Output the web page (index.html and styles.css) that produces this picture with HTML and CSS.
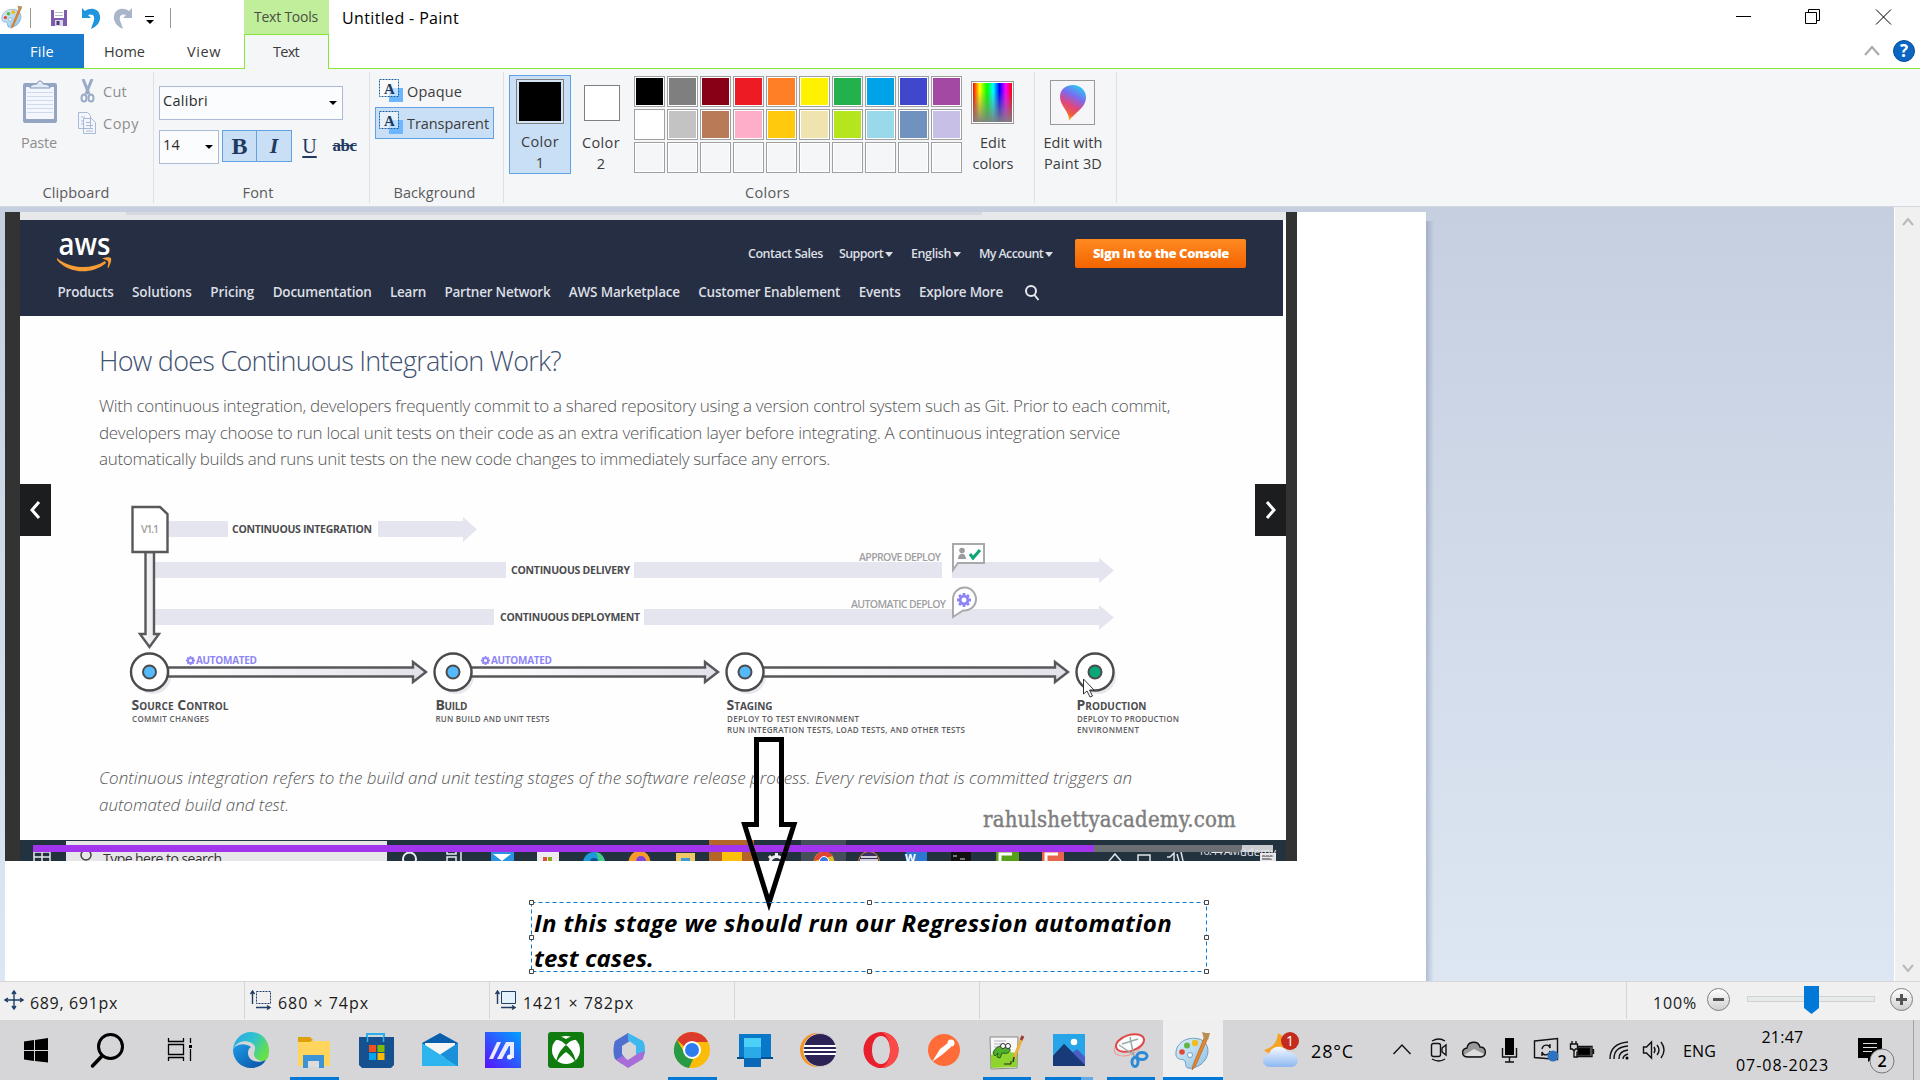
FILE: index.html
```html
<!DOCTYPE html>
<html lang="en">
<head>
<meta charset="utf-8">
<title>Untitled - Paint</title>
<link rel="stylesheet" href="styles.css">
</head>
<body>
<svg width="0" height="0" class="defs">
  <defs>
    <linearGradient id="shaft" x1="0" x2="1"><stop offset="0" stop-color="#fff"/><stop offset="1" stop-color="#e1e2ea"/></linearGradient>
    <linearGradient id="rainbow"><stop offset="0" stop-color="#f00"/><stop offset=".17" stop-color="#ff0"/><stop offset=".36" stop-color="#0f0"/><stop offset=".52" stop-color="#0ff"/><stop offset=".68" stop-color="#00f"/><stop offset=".84" stop-color="#f0f"/><stop offset="1" stop-color="#f00"/></linearGradient>
    <linearGradient id="fadegray" x2="0" y2="1"><stop offset=".2" stop-color="#808080" stop-opacity="0"/><stop offset="1" stop-color="#808080" stop-opacity=".95"/></linearGradient>
    <linearGradient id="drop" x1=".8" y1="0" x2=".4" y2="1"><stop offset="0" stop-color="#1fd6f5"/><stop offset=".35" stop-color="#7a6cf0"/><stop offset=".62" stop-color="#e0457d"/><stop offset=".85" stop-color="#f0603a"/><stop offset="1" stop-color="#fdb515"/></linearGradient>
    <linearGradient id="edgeA" x1="0" y1="0" x2="1" y2=".5"><stop offset="0" stop-color="#2aa6e8"/><stop offset=".55" stop-color="#30c2d0"/><stop offset="1" stop-color="#63e04a"/></linearGradient>
    <linearGradient id="edgeB" x1="0" y1="0" x2="1" y2="1"><stop offset="0" stop-color="#1d9be8"/><stop offset="1" stop-color="#0a4fa0"/></linearGradient>
    <linearGradient id="ma" x1="1" y1="0" x2="0" y2="1"><stop offset="0" stop-color="#00a2ff"/><stop offset="1" stop-color="#5a10ff"/></linearGradient>
    <linearGradient id="sky" x2="0" y2="1"><stop offset="0" stop-color="#f5f9ff"/><stop offset="1" stop-color="#8db8f2"/></linearGradient>
    <linearGradient id="palG" x1="0" y1="0" x2="1" y2="1"><stop offset="0" stop-color="#dff1fb"/><stop offset="1" stop-color="#8fc1e4"/></linearGradient>
    <linearGradient id="knob" x2="0" y2="1"><stop offset="0" stop-color="#fff"/><stop offset="1" stop-color="#cfcfcf"/></linearGradient>
    <symbol id="palette" viewBox="0 0 36 40">
      <path d="M1 24C0 12 12 5 24 8c10 3 11 14 6 21-4 6-12 9-17 8-4-1-1-6-4-8-3-1-7 0-8-5z" fill="url(#palG)" stroke="#6d9cc0"/>
      <circle cx="7" cy="21" r="2.8" fill="#e04a35"/><circle cx="12" cy="14.500" r="3" fill="#62b545"/><circle cx="20" cy="12" r="3.200" fill="#f3bd20"/><circle cx="15" cy="24" r="2.500" fill="#fff" stroke="#6fa3c8"/>
      <path d="M29 7l3 2-12 27-3 3 1-5z" fill="#e8842a" stroke="#a85a18" stroke-width=".6"/><path d="M27 1l4 1 4 0-2 7-4-1z" fill="#b98d56"/>
    </symbol>
    <symbol id="abox" viewBox="0 0 24 24"><rect x="10" y="9" width="14" height="14" fill="#6cb6ff"/><rect x=".5" y=".5" width="19" height="17" fill="#fff" fill-opacity=".55" stroke="#1b5f9e" stroke-dasharray="2 1"/><text x="5" y="15" class="serif-a">A</text></symbol>
    <symbol id="gear" viewBox="-10 -10 20 20"><circle r="5.500" fill="none" stroke="#8f86f5" stroke-width="4"/><path d="M0-10V-6M0 10V6M-10 0H-6M10 0H6M-7-7L-4-4M7 7L4 4M-7 7L-4 4M7-7L4-4" stroke="#8f86f5" stroke-width="4"/></symbol>
  </defs>
</svg>

<header class="titlebar">
  <svg class="quick" width="244" height="34" viewBox="0 0 244 34">
    <use href="#palette" x="0" y="5" width="24" height="24"/>
    <path d="M30.500 8v20M170.500 8v20" stroke="#999"/>
    <path d="M51 10h16v16H51z" fill="#7c5bb0"/><path d="M54 10h10v8H54z" fill="#fff"/><path d="M55 12.500h8M55 15.500h8" stroke="#b9b9c8"/><path d="M55 20h8v6h-8z" fill="#d8d8e4"/><path d="M56.500 21h3v4h-3z" fill="#4e3a80"/>
    <path d="M82 8v10h9l-3-3c5-2 8 1 5 8l-2 6c6-2 10-8 9-13-1-8-10-9-15-5z" fill="#1e95dc"/>
    <path d="M132 8v10h-9l3-3c-5-2-8 1-5 8l2 6c-6-2-10-8-9-13 1-8 10-9 15-5z" fill="#a9b6ca"/>
    <path d="M145 16.500h9" stroke="#000"/><path d="M146 20h8l-4 4z"/>
  </svg>
  <div class="context-tab"><span data-w="64">Text Tools</span></div>
  <div class="window-title"><span data-w="117">Untitled - Paint</span></div>
  <svg class="controls" width="200" height="34" viewBox="1720 0 200 34" fill="none" stroke="#000">
    <path d="M1736 16.500h15"/><path d="M1805.500 12.500h11v11h-11zM1808.500 12v-2.500h11v11h-3"/><path d="M1876 9.500l15 15M1891 9.500l-15 15"/>
  </svg>
</header>
<nav class="tabs">
  <div class="tab file"><span data-w="24">File</span></div>
  <div class="tab home"><span data-w="41">Home</span></div>
  <div class="tab view"><span data-w="34">View</span></div>
  <div class="tab active"><span data-w="26">Text</span></div>
  <svg class="help" width="60" height="34" viewBox="1860 34 60 34"><path d="M1865 55l7-8 7 8" fill="none" stroke="#a8a8a8" stroke-width="2"/><circle cx="1904" cy="51" r="10.500" fill="#0a66c2" stroke="#084f98"/><text x="1904" y="57" class="help-q">?</text></svg>
</nav>

<section class="ribbon">
  <div class="group clipboard">
    <div class="row">
      <div class="big disabled paste">
        <svg width="36" height="44" viewBox="22 80 36 44"><rect x="23" y="83" width="34" height="40" rx="2" fill="#94a5c4"/><path d="M26 87h28v32H26z" fill="#f3f7fd"/><path d="M27 92.500h26M27 96.500h26M27 100.500h26M27 104.500h26M27 108.500h26M27 112.500h26" stroke="#cfd9ea"/><path d="M30 88c0-3 4-4 7-4 0-4 6-4 6 0 3 0 7 1 7 4z" fill="#dfe8f5" stroke="#8494b4"/></svg>
        <span data-w="36">Paste</span>
      </div>
      <div class="stack">
        <div class="small disabled"><svg width="20" height="24" viewBox="78 79 20 24" fill="none" stroke="#9aabc8"><path d="M83 79l6 15M92 79l-6 15" stroke-width="3"/><ellipse cx="84" cy="98" rx="2.500" ry="3.500" stroke-width="2"/><ellipse cx="91" cy="98" rx="2.500" ry="3.500" stroke-width="2"/></svg><span data-w="24">Cut</span></div>
        <div class="small disabled"><svg width="20" height="24" viewBox="78 111 20 24" fill="#f3f7fd" stroke="#a9b8d4"><path d="M78.500 112.500h9l3 3v13h-12zM83.500 118.500h8l4 4v11h-12z"/><path d="M86 122.500h4M86 125.500h7M86 128.500h7M86 131h7M81 117h4M81 121h2M81 124h2"/></svg><span data-w="36">Copy</span></div>
      </div>
    </div>
    <div class="caption"><span data-w="67">Clipboard</span></div>
  </div>
  <div class="group font">
    <div class="combo wide"><span data-w="45">Calibri</span><i class="caret"></i></div>
    <div class="row format">
      <div class="combo size"><span data-w="17">14</span><i class="caret"></i></div>
      <div class="toggle b">B</div><div class="toggle i">I</div><div class="plain u">U</div><div class="plain s"><span data-w="24">abc</span></div>
    </div>
    <div class="caption"><span data-w="31">Font</span></div>
  </div>
  <div class="group background">
    <div class="option"><svg width="24" height="24"><use href="#abox"/></svg><span data-w="55">Opaque</span></div>
    <div class="option selected"><svg width="24" height="24"><use href="#abox"/></svg><span data-w="82">Transparent</span></div>
    <div class="caption"><span data-w="82">Background</span></div>
  </div>
  <div class="group colors">
    <div class="row">
      <div class="big color-one"><i class="swatch large"></i><span data-w="38">Color</span><span>1</span></div>
      <div class="big color-two"><i class="swatch medium"></i><span data-w="38">Color</span><span>2</span></div>
      <div class="swatches">
        <i class="c1"></i><i class="c2"></i><i class="c3"></i><i class="c4"></i><i class="c5"></i><i class="c6"></i><i class="c7"></i><i class="c8"></i><i class="c9"></i><i class="c10"></i>
        <i class="c11"></i><i class="c12"></i><i class="c13"></i><i class="c14"></i><i class="c15"></i><i class="c16"></i><i class="c17"></i><i class="c18"></i><i class="c19"></i><i class="c20"></i>
        <i></i><i></i><i></i><i></i><i></i><i></i><i></i><i></i><i></i><i></i>
      </div>
      <div class="big edit"><svg width="44" height="44"><rect x=".5" y=".5" width="42" height="42" fill="#fff" stroke="#999"/><path d="M2 2h39v39H2z" fill="url(#rainbow)"/><path d="M2 2h39v39H2z" fill="url(#fadegray)"/></svg><span data-w="26">Edit</span><span data-w="41">colors</span></div>
    </div>
    <div class="caption"><span data-w="45">Colors</span></div>
  </div>
  <div class="group paint3d">
    <div class="big"><svg width="46" height="46"><rect x=".5" y=".500" width="44" height="44" fill="#f6f6f8" stroke="#999"/><path d="M19 41c1-9-9-15-9-24C10 9 16 5 23 5s13 5 13 12c0 11-11 15-17 24z" fill="url(#drop)"/></svg><span data-w="59">Edit with</span><span data-w="58">Paint 3D</span></div>
  </div>
</section>

<main class="stage">
  <div class="canvas">
    <div class="photo">
      <div class="browser-strip"></div>
      <div class="aws-nav">
        <div class="aws-top">
          <svg class="aws-logo" width="58" height="38" viewBox="55 234 58 38"><text x="58.500" y="254.500" textLength="52" lengthAdjust="spacingAndGlyphs" class="aws-word">aws</text><path d="M57 258c13 11 34 12 48 3l1 2c-14 12-37 11-49-3z" fill="#f79b34"/><path d="M102 258.500c4-1 8-2 9 0 1 1-1 7-3 10-1-1 1-6 0-7-1-2-4-2-6-3z" fill="#f79b34"/></svg>
          <div class="aws-links">
            <span class="contact" data-w="75">Contact Sales</span>
            <span class="menu"><b data-w="44">Support</b><i></i></span>
            <span class="menu"><b data-w="40">English</b><i></i></span>
            <span class="menu"><b data-w="64">My Account</b><i></i></span>
            <span class="signin"><b data-w="136">Sign In to the Console</b></span>
          </div>
        </div>
        <div class="aws-menu">
          <span data-w="56">Products</span><span data-w="60">Solutions</span><span data-w="44">Pricing</span><span data-w="99">Documentation</span><span data-w="36">Learn</span><span data-w="106">Partner Network</span><span data-w="111">AWS Marketplace</span><span data-w="142">Customer Enablement</span><span data-w="42">Events</span><span data-w="84">Explore More</span>
          <svg width="16" height="18" fill="none" stroke="#e8eaee" stroke-width="2"><circle cx="7" cy="7" r="5"/><path d="M10.500 11l4 5"/></svg>
        </div>
      </div>
      <article>
        <h1><span data-w="462">How does Continuous Integration Work?</span></h1>
        <p>
          <span data-w="1071">With continuous integration, developers frequently commit to a shared repository using a version control system such as Git. Prior to each commit,</span>
          <span data-w="1021">developers may choose to run local unit tests on their code as an extra verification layer before integrating. A continuous integration service</span>
          <span data-w="731">automatically builds and runs unit tests on the new code changes to immediately surface any errors.</span>
        </p>
        <svg class="diagram" width="1266" height="293" viewBox="20 472 1266 293">
          <g fill="#e5e5ef">
            <path d="M168 521h60v16h-60zM378 521h85v-4l14 12.500-14 12.500v-5h-85z"/>
            <path d="M155 562h351v16H155zM634 562h308v16H634zM952 562h147v-4l15 12.500-15 12.500v-5H952z"/>
            <path d="M155 609h339v16H155zM644 609h455v-4l15 12.500-15 12.500v-5H644z"/>
          </g>
          <g class="lane">
            <text x="232" y="532.500" textLength="140">CONTINUOUS INTEGRATION</text>
            <text x="511" y="573.500" textLength="119">CONTINUOUS DELIVERY</text>
            <text x="500" y="620.500" textLength="140">CONTINUOUS DEPLOYMENT</text>
          </g>
          <g class="lane gray">
            <text x="859" y="560.500" textLength="82">APPROVE DEPLOY</text>
            <text x="851" y="607.500" textLength="95">AUTOMATIC DEPLOY</text>
          </g>
          <g fill="#fff" stroke="#a9a9ab" stroke-width="2">
            <path d="M953 544h31v19h-26l-5 7z"/><path d="M953 617v-18a11.500 11.500 0 1 1 10 11.500z"/>
          </g>
          <circle cx="962" cy="550.500" r="2.800" fill="#9c9c9e"/><path d="M958 559c0-7 8-7 8 0z" fill="#9c9c9e"/><path d="M970 554l3 4 7-8" fill="none" stroke="#0ca678" stroke-width="3"/>
          <use href="#gear" x="957" y="593" width="14" height="14"/>
          <g fill="#d9d9e2" opacity=".6"><circle cx="153" cy="676" r="18"/><circle cx="456" cy="676" r="18"/><circle cx="748" cy="676" r="18"/><circle cx="1098" cy="676" r="18"/></g>
          <g fill="url(#shaft)" stroke="#58585a" stroke-width="2.400">
            <path d="M168 667.500h245v-5.500l13 10-13 10v-5.500H168z"/><path d="M471 667.500h234v-5.500l13 10-13 10v-5.500H471z"/><path d="M763 667.500h292v-5.500l13 10-13 10v-5.500H763z"/>
            <path d="M145.500 552v82h-5.500l9.500 13 9.500-13h-5v-82z"/>
            <path d="M132.500 507h27.500l7.500 7v38h-35z" fill="#fff"/>
          </g>
          <g class="lane gray"><text x="141" y="533" textLength="18">V1.1</text></g>
          <g fill="#fff" stroke="#4b4b4d" stroke-width="2.400"><circle cx="149.500" cy="672" r="18.500"/><circle cx="453" cy="672" r="18.500"/><circle cx="745" cy="672" r="18.500"/><circle cx="1095" cy="672" r="18.500"/></g>
          <g fill="#55bafc" stroke="#4b4b4d" stroke-width="2"><circle cx="149.500" cy="672" r="6.500"/><circle cx="453" cy="672" r="6.500"/><circle cx="745" cy="672" r="6.500"/><circle cx="1095" cy="672" r="6.500" fill="#0aa878"/></g>
          <use href="#gear" x="186" y="656" width="9" height="9"/><use href="#gear" x="481" y="656" width="9" height="9"/>
          <g class="lane violet"><text x="196" y="664" textLength="61">AUTOMATED</text><text x="491" y="664" textLength="61">AUTOMATED</text></g>
          <g class="step">
            <text x="131.500" y="710" textLength="97">Source Control</text><text x="435.500" y="710" textLength="32">Build</text><text x="726.500" y="710" textLength="46">Staging</text><text x="1076.500" y="710" textLength="70">Production</text>
          </g>
          <g class="note">
            <text x="132" y="722" textLength="77">COMMIT CHANGES</text><text x="435.500" y="722" textLength="114">RUN BUILD AND UNIT TESTS</text>
            <text x="727" y="722" textLength="132">DEPLOY TO TEST ENVIRONMENT</text><text x="727" y="732.500" textLength="238">RUN INTEGRATION TESTS, LOAD TESTS, AND OTHER TESTS</text>
            <text x="1077" y="722" textLength="102">DEPLOY TO PRODUCTION</text><text x="1077" y="732.500" textLength="62">ENVIRONMENT</text>
          </g>
          <path d="M1083.500 679v15l3.500-3 3 6 2.500-1-3-6h4.500z" fill="#fff" stroke="#333"/>
        </svg>
        <p class="remark">
          <span data-w="1033">Continuous integration refers to the build and unit testing stages of the software release process. Every revision that is committed triggers an</span>
          <span data-w="190">automated build and test.</span>
        </p>
      </article>
      <svg class="mini-taskbar" width="1266" height="21" viewBox="20 840 1266 21">
        <path d="M20 840h1266v21H20z" fill="#23323f"/><path d="M66 841h321v20H66z" fill="#e6e6e8"/><path d="M709 840h45v21h-45z" fill="#b4662a"/><path d="M801 840h45v21h-45z" fill="#454f5b"/>
        <path d="M34 852h16v9M42 850v11M34 857h16M34 850v11" stroke="#e8eaec" stroke-width="1.500" fill="none"/>
        <circle cx="86" cy="855" r="5" fill="none" stroke="#444" stroke-width="1.500"/><text x="103" y="864" textLength="119" class="mini-search">Type here to search</text>
        <circle cx="409.500" cy="859" r="6.500" fill="none" stroke="#e8eaec" stroke-width="2"/><path d="M447 851v3h9v-3M447 857h9v5h-9zM461 850v12" fill="none" stroke="#e8eaec" stroke-width="1.500"/>
        <path d="M491 852h23v9h-23z" fill="#2a94e0"/><path d="M493 854h18l-9 7z" fill="#fff"/><path d="M537 852h22v9h-22z" fill="#ececf0"/><path d="M543 857h4v4h-4z" fill="#e0502a"/><path d="M548 857h4v4h-4z" fill="#8aa820"/>
        <circle cx="594" cy="863" r="11" fill="#1e9ad8"/><path d="M596 852a11 11 0 0 1 9 10h-6z" fill="#44cc86"/><circle cx="594" cy="862" r="4" fill="#12508e"/><circle cx="639.500" cy="862" r="11" fill="#f79a2c"/><circle cx="641" cy="861" r="5" fill="#8145d8"/>
        <path d="M676 853h19v8h-19z" fill="#eec866"/><path d="M681 858h9v3h-9z" fill="#3f98d8"/><path d="M722 852h20v9h-20z" fill="#fbbf0c"/><path d="M770 863a6.500 6.500 0 0 1 13 0" fill="none" stroke="#eee" stroke-width="3"/><path d="M776.500 853v4M769 856l3 3M784 856l-3 3" stroke="#eee" stroke-width="3"/>
        <circle cx="824" cy="862" r="10.500" fill="#e2b92c"/><path d="M814 861a10.500 10.500 0 0 1 19-5l-9 2z" fill="#df4535"/><circle cx="824" cy="861" r="4.500" fill="#3b78e8" stroke="#fff"/>
        <circle cx="869" cy="862" r="10.500" fill="#3b3163" stroke="#d98a39"/><path d="M861 857h16M860 860h18" stroke="#fff" stroke-width="1.500"/>
        <path d="M906 852h21v9h-21z" fill="#2c78d0"/><text x="905" y="862" class="mini-w">W</text><path d="M951 852h20v9h-20z" fill="#111"/><path d="M953 856h4M960 859h5" stroke="#ddd"/>
        <path d="M996 852h23v9h-23z" fill="#56a018"/><path d="M1000 861v-7h12" stroke="#fff" stroke-width="3" fill="none"/><path d="M1042 852h22v9h-22z" fill="#e8644a"/><path d="M1046 861v-7h12" stroke="#fff" stroke-width="3" fill="none"/>
        <path d="M1109 861l6-7 6 7M1138 855h12v7h-12zM1167 857h3l4-4v8M1177 854l2 7M1181 852l2 9" stroke="#e0e4e8" stroke-width="1.500" fill="none"/>
        <path d="M1260 853h16v8h-16z" fill="#e8e8ec"/><path d="M1262 856h12M1262 859h10" stroke="#333"/>
        <text x="1198" y="855" textLength="42" class="mini-clock">10:44 AM</text>
        <path d="M33 845h1061v7H33z" fill="#a334ee"/><path d="M1094 845h148v7h-148z" fill="#6b6f73"/><path d="M1242 845h31v7h-31z" fill="#c9cbcf"/>
        <text x="1240" y="856" textLength="36" class="mini-brand">ûdemy</text>
      </svg>
      <div class="watermark"><span data-w="253">rahulshettyacademy.com</span></div>
      <div class="pager prev"><svg width="12" height="20" fill="none" stroke="#fff" stroke-width="3"><path d="M10 2L3 10l7 8"/></svg></div>
      <div class="pager next"><svg width="12" height="20" fill="none" stroke="#fff" stroke-width="3"><path d="M2 2l7 8-7 8"/></svg></div>
    </div>
    <svg class="drawn-arrow" width="60" height="176" viewBox="740 735 60 176" fill="none" stroke="#000" stroke-width="5"><path d="M756.500 739.500h25V824.500H794L769 903 744.500 824.500h12z"/></svg>
    <div class="textbox"><svg width="676" height="71" viewBox="531 902 676 71"><path d="M531.500 902.500h675v69h-675z" fill="none" stroke="#0a78d0" stroke-dasharray="4 3"/><g fill="#fff" stroke="#444"><path d="M529.500 900.500h4v4h-4zM867.500 900.500h4v4h-4zM1204.500 900.500h4v4h-4zM529.500 935.500h4v4h-4zM1204.500 935.500h4v4h-4zM529.500 969.500h4v4h-4zM867.500 969.500h4v4h-4zM1204.500 969.500h4v4h-4z"/></g></svg>
      <div class="typed"><span data-w="638">In this stage we should run our Regression automation</span><span data-w="120">test cases.</span></div>
    </div>
  </div>
  <div class="canvas-shadow"><i></i></div>
  <div class="scrollbar"><svg width="12" height="10"><path d="M1 8l5-6 5 6" fill="none" stroke="#b8b8b8" stroke-width="2"/></svg><svg width="12" height="10"><path d="M1 2l5 6 5-6" fill="none" stroke="#b8b8b8" stroke-width="2"/></svg></div>
</main>

<footer class="status">
  <div class="cell pos"><svg width="20" height="20" fill="none" stroke="#1f3d66" stroke-width="1.400"><path d="M10 1v18M1 10h18M8 4l2-3 2 3M8 16l2 3 2-3M4 8l-3 2 3 2M16 8l3 2-3 2"/></svg><span data-w="88">689, 691px</span></div>
  <div class="cell"><svg width="22" height="20" fill="none" stroke="#1f3d66"><path d="M6.500 1.500h14v12h-14z" stroke-dasharray="2 1"/><path d="M2.500 14V1M.5 4l2-3 2 3M6 17.500h14M17 15.500l3 2-3 2" stroke-width="1.400"/></svg><span data-w="91">680 × 74px</span></div>
  <div class="cell"><svg width="22" height="20" fill="none" stroke="#1f3d66"><path d="M6.500 1.500h14v12h-14z" fill="#e4f2fb"/><path d="M2.500 14V1M.5 4l2-3 2 3M6 17.500h14M17 15.500l3 2-3 2" stroke-width="1.400"/></svg><span data-w="111">1421 × 782px</span></div>
  <div class="cell"></div>
  <div class="cell long"></div>
  <div class="zoom"><span data-w="44">100%</span>
    <svg width="216" height="38" viewBox="1700 982 216 38"><circle cx="1718.500" cy="999.500" r="11" fill="url(#knob)" stroke="#808080"/><path d="M1713 999.500h11" stroke="#555" stroke-width="3"/><path d="M1747.500 996.500h127v5h-127z" fill="#e7eaea" stroke="#d2d2d2"/><path d="M1804 986h15v22l-7.500 6-7.500-6z" fill="#0078d7"/><circle cx="1901.500" cy="999.500" r="11" fill="url(#knob)" stroke="#808080"/><path d="M1896 999.500h11M1901.500 994v11" stroke="#555" stroke-width="3"/></svg>
  </div>
</footer>

<footer class="taskbar">
  <svg class="apps" width="1240" height="60" viewBox="0 1020 1240 60">
    <path d="M1163 1020h60v60h-60z" fill="#efeff0"/>
    <path d="M24 1041.500l10-1.500v10H24zM35 1040l13-2v12H35zM24 1051h10v10l-10-1.500zM35 1051h13v11.500L35 1061z"/>
    <circle cx="110.500" cy="1046.500" r="12" fill="none" stroke="#000" stroke-width="3"/><path d="M102 1056l-9.500 10" stroke="#000" stroke-width="3.500" stroke-linecap="round"/>
    <g fill="none" stroke="#000" stroke-width="1.300"><path d="M168.500 1038v3.500h15V1038M168.500 1044.500h15v10h-15zM168.500 1061v-3.500h15v3.500M190.500 1038v5M190.500 1049v12"/></g><path d="M189 1045h3v3h-3z"/>
    <path d="M269 1050c0-10-8-18-18-18s-17 8-18 17c4-8 14-10 20-5 4 3 1 7 1 10 0 4 4 7 9 7s6-6 6-11z" fill="url(#edgeA)"/><path d="M233 1050c0 10 8 18 18 18 7 0 12-3 15-8-8 4-18 1-18-7 0-3 1-5 3-6-8-6-18-1-18 3z" fill="url(#edgeB)"/>
    <path d="M298 1037h12l3 4h17v25h-32z" fill="#ffd55e"/><path d="M298 1037h12l3 3-3 2h-12z" fill="#dca10c"/><path d="M303 1068v-13h21v13h-5v-7h-11v7z" fill="#3c94d6"/><path d="M308 1061h11v6h-11z" fill="#dcdcde"/>
    <path d="M367 1042v-8h17v8" fill="none" stroke="#2ab0ea" stroke-width="2"/><path d="M359 1037h35v28l-3 3h-29l-3-3z" fill="#16508f"/><path d="M367.500 1037v5M383.500 1037v5" stroke="#2ab0ea" stroke-width="1.500"/><path d="M369 1045h7v7h-7z" fill="#f1511b"/><path d="M377.500 1045h7v7h-7z" fill="#80bb03"/><path d="M369 1053h7v7h-7z" fill="#04a4ee"/><path d="M377.500 1053h7v7h-7z" fill="#fbb908"/>
    <path d="M422 1043l18-10 18 10v23h-36z" fill="#0a5fac"/><path d="M425 1043h30v8l-15 10-15-10z" fill="#f5f5f5"/><path d="M422 1043l36 23h-36z" fill="#2fb5ee"/><path d="M458 1043l-18 11.500 18 11.500z" fill="#1a90da"/>
    <path d="M485 1032h36v36h-36z" fill="url(#ma)"/><path d="M489 1059l8-17h4l-8 17zM497 1059l9-17h8v16h-4v-12l-1 0-7 13z" fill="#eceaff"/><circle cx="509.500" cy="1057" r="2.500" fill="#fff"/>
    <rect x="548" y="1032" width="36" height="36" rx="3" fill="#107c10"/><circle cx="566" cy="1050" r="14" fill="#fff"/><path d="M554 1040c5-1 9 2 12 5 3-3 7-6 12-5l-2-3c-3-1-7 0-10 2-3-2-7-3-10-2zM556 1063c1-8 5-14 10-18 5 4 9 10 10 18-3-5-6-8-10-11-4 3-7 6-10 11z" fill="#107c10"/>
    <path d="M628 1033l-13 8c-2 5-2 14 0 18l7 5 3-6-3-4v-8l11-7z" fill="#4f6fd0"/><path d="M628 1033l15 8c3 5 2 10 1 15l-8-2v-8l-8-6z" fill="#40b8ee"/><path d="M616 1060l12 8 15-9 2-8-8 3-9 6-6-4z" fill="#a86cd8"/>
    <circle cx="692" cy="1050" r="18" fill="#fbbc09"/><path d="M692 1032a18 18 0 0 1 16 10h-16l-7 5-8-7a18 18 0 0 1 15-8z" fill="#db3a2c"/><path d="M677 1040l8 14 8 5-4 9a18 18 0 0 1-12-28z" fill="#289a45"/><circle cx="692" cy="1050" r="8" fill="#2f7cf0" stroke="#fff" stroke-width="2"/>
    <path d="M739 1034h32v24h-32z" fill="#0a78c8"/><path d="M737 1057h36v2h-36z" fill="#075090"/><path d="M744 1038h17v29h-17z" fill="#2aaae8"/><path d="M744 1038h17v9h-17z" fill="#4cd0f8"/><path d="M744 1058h17v9h-17z" fill="#0a68b8"/>
    <circle cx="817" cy="1050" r="17" fill="#f7941e"/><circle cx="820" cy="1050" r="16.500" fill="#2c2255" stroke="#dcdcde" stroke-width=".8"/><path d="M804 1046h32M803.500 1050h33M804 1054h32" stroke="#fff" stroke-width="2"/>
    <path fill-rule="evenodd" d="M881 1032a17.500 18 0 1 0 .1 0zM881 1036c6 0 9 7 9 14s-3 14-9 14-9-7-9-14 3-14 9-14z" fill="#e8202c"/><path d="M881 1032a17.500 18 0 0 1 0 36c6-2 9-9 9-18s-3-16-9-18z" fill="#fb4a48"/>
    <circle cx="944" cy="1050" r="16" fill="#ff6c37"/><path d="M932 1062l8-13 8-6 3 4-8 7z" fill="#fff"/><circle cx="951" cy="1043" r="3.500" fill="#fff"/>
    <path d="M990 1037h28l-1 31-26 1z" fill="#f7f7f7" stroke="#888"/><path d="M991 1055l9-4 17 2v14l-26 1z" fill="#8ed32e"/><path d="M994 1041h12M994 1044h8M994 1047h5" stroke="#b5b5c0"/><path d="M993 1053c2-6 8-9 14-6l3 2c1 4-4 5-8 4l-2 5-3-1 1-4-3 3z" fill="#4fae2c" stroke="#24601a"/><circle cx="1003" cy="1046" r="2.500" fill="#fff" stroke="#333"/><circle cx="1008" cy="1046" r="2.500" fill="#fff" stroke="#333"/><path d="M1004 1064h7v-3" fill="none" stroke="#222"/><path d="M1022 1038l-8 20" stroke="#e9b23c" stroke-width="3"/><path d="M1014 1057l-1 5" stroke="#333" stroke-width="1.500"/><path d="M1021 1040l2-4" stroke="#a04038" stroke-width="3"/>
    <path d="M1053 1034h32v32h-32z" fill="#28a4e8"/><path d="M1053 1056l11-12 21 21v1h-32z" fill="#183a78"/><path d="M1068 1056l9-7 8 8v9z" fill="#4a5fc4"/><path d="M1053 1056l11-12 21 21v1h-32z" fill="#183a78"/><circle cx="1074" cy="1042" r="3.300" fill="#fff"/>
    <g fill="none"><ellipse cx="1129" cy="1047" rx="14" ry="8" stroke="#ee9a9a" transform="rotate(-18 1129 1051)"/><ellipse cx="1130" cy="1043" rx="14.500" ry="8" fill="#fbfbfb" stroke="#e04848" stroke-width="2" transform="rotate(-18 1130 1043)"/><path d="M1130 1037l4 20M1119 1045l18 12M1122 1044l16-5" stroke="#9aa" stroke-width="1.500"/><ellipse cx="1142" cy="1056" rx="5" ry="3.500" stroke="#2a8ad4" stroke-width="3"/><ellipse cx="1135" cy="1062" rx="3" ry="4.500" stroke="#2a8ad4" stroke-width="3"/></g>
    <use href="#palette" x="1174" y="1031" width="38" height="40"/>
    <path d="M290 1077h49v3h-49zM668 1077h49v3h-49zM983 1077h48v3h-48zM1045 1077h36v3h-36zM1107 1077h48v3h-48zM1163 1077h60v3h-60z" fill="#0078d7"/><path d="M1081 1077h12v3h-12z" fill="#62abe6"/>
  </svg>
  <div class="tray">
    <svg class="weather" width="40" height="40" viewBox="1262 1030 40 40"><path d="M1278 1033c-1 10-6 15-14 17 5 5 15 6 20 0 4-5 1-14-6-17z" fill="#f7a326"/><path d="M1270 1067c-9 0-9-11-1-12 1-10 15-11 18-3 12-1 15 14 4 15z" fill="url(#sky)"/><circle cx="1290" cy="1041" r="9" fill="#c42b1c"/><text x="1286" y="1046" class="badge-n">1</text></svg>
    <span class="temp" data-w="43">28°C</span>
    <svg class="trayicons" width="290" height="34" viewBox="1385 1033 290 34" fill="none" stroke="#111" stroke-width="1.400">
      <path d="M1393.500 1054l8.500-9 8.500 9"/>
      <rect x="1431.500" y="1043.500" width="9" height="13" rx="2"/><path d="M1442 1048l4-3v10l-4-3zM1432 1041q7-4 13 0M1432 1059q7 4 13 0"/>
      <path d="M1468 1057c-7 0-7-8-1-9 1-7 11-8 13-1 7 0 7 10 1 10z" fill="#999"/><path d="M1464 1055l10-6 10 5-3 2h-14z" fill="#ddd" stroke="none"/>
      <rect x="1505" y="1038" width="9" height="17" fill="#000" stroke="none"/><path d="M1502.500 1048v9h14v-9M1509.500 1057v5M1505 1062h9"/>
      <path d="M1534.500 1041l23-2.500v21l-23-2z"/><path d="M1542 1049c1-5 7-5 8-1v-4M1550 1051c-1 5-7 5-8 1v4"/><circle cx="1553" cy="1056" r="5.500" fill="#2d72c0" stroke="none"/>
      <path d="M1577 1046.500h15v10h-15v-5M1593.500 1049v5"/><path d="M1578 1048h12v7h-12z" fill="#000"/><path d="M1570.500 1044h7v5h-2l-1.500 2-1.500-2h-2zM1572 1041v3M1576 1041v3M1574 1051v6h4"/>
      <path d="M1610 1059c0-11 7-16 18-17M1614 1059c0-9 5-12 14-13M1619 1059c0-6 3-8 9-9M1623 1059c0-3 2-4 5-5"/><circle cx="1627" cy="1058" r="1.500" fill="#000" stroke="none"/>
      <path d="M1643.500 1047h3l5-5v16l-5-5h-3zM1654 1047q2 3 0 6M1657 1045q4 5 0 10M1661 1042q6 8 0 16"/>
    </svg>
    <span class="lang" data-w="33">ENG</span>
    <div class="clock"><span data-w="42">21:47</span><span data-w="93">07-08-2023</span></div>
    <svg class="notif" width="64" height="60" viewBox="1850 1020 64 60"><path d="M1858 1038h24v20h-9l-5 4v-4h-10z"/><path d="M1863 1043.500h14M1863 1047.500h14M1863 1051.500h9" stroke="#ddd"/><circle cx="1882" cy="1061" r="12" fill="#d9d9db" stroke="#777"/><text x="1877.500" y="1067" class="notif-n">2</text><path d="M1913.500 1020v60" stroke="#a2a2a4"/></svg>
  </div>
</footer>
<script src="fit.js"></script>
</body>
</html>
```
FILE: fit.js
```js
// Tracks each label so that its text run fills the width given in data-w.
document.querySelectorAll('[data-w]').forEach(function (el) {
  var range = document.createRange();
  range.selectNodeContents(el);
  var natural = range.getBoundingClientRect().width;
  var count = el.textContent.length;
  el.style.letterSpacing = ((el.dataset.w - natural) / count).toFixed(3) + 'px';
});
```
FILE: styles.css
```css
* { box-sizing: border-box; }
body { margin: 0; width: 1920px; height: 1080px; overflow: hidden; display: flex; flex-direction: column; font: 15px/20px "Open Sans", "Noto Sans", sans-serif; color: #1e1e1e; background: #fff; }
svg { display: block; flex: none; }
[data-w] { white-space: nowrap; }
.defs { position: absolute; }
.row { display: flex; }

.titlebar { height: 34px; display: flex; }
.context-tab { width: 85px; background: #c1ee9b; padding: 7px 0 0 10px; font-size: 14px; color: #4a4f45; }
.window-title { padding: 8px 0 0 13px; font-size: 16px; color: #000; }
.controls { margin-left: auto; }

.tabs { height: 35px; display: flex; box-shadow: inset 0 -1px #86e63e; color: #3b3b3b; font-size: 14.5px; }
.tab { height: 34px; padding-top: 8px; }
.tab.file { width: 84px; background: #1979ca; color: #fff; padding-left: 30px; }
.tab.home { width: 84px; padding-left: 20px; }
.tab.view { width: 76px; padding-left: 19px; }
.tab.active { width: 85px; height: 35px; padding: 7px 0 0 28px; background: #f5f6f8; border: 1px solid #86e63e; border-bottom: 0; }
.help { margin-left: auto; }
.help-q { font: 700 17px "Open Sans", sans-serif; fill: #fff; text-anchor: middle; }

.ribbon { height: 138px; background: #f5f6f8; border-bottom: 1px solid #d3d7de; display: flex; padding-top: 3px; color: #3c3c3c; font-size: 14.5px; }
.group { height: 131px; border-right: 1px solid #dfe1e4; display: flex; flex-direction: column; position: relative; }
.caption { margin-top: auto; height: 20px; text-align: center; color: #5a5a5a; }
.disabled { color: #8d8d8d; }
.clipboard { width: 154px; padding-top: 7px; }
.clipboard .caption { padding-right: 1px; }
.big { display: flex; flex-direction: column; align-items: center; line-height: 21px; }
.paste { width: 78px; padding: 1px 0 0 2px; }
.paste span { margin: 8px 2px 0 0; }
.stack { display: flex; flex-direction: column; gap: 8px; }
.small { display: flex; gap: 5px; height: 24px; line-height: 25px; }

.font { width: 216px; padding: 14px 0 0 5px; }
.font .caption { padding-right: 12px; }
.combo { background: #fbfcfe; border: 1px solid #abbbd6; height: 34px; line-height: 28px; padding: 0 10px 0 3px; display: flex; justify-content: space-between; align-items: flex-start; color: #2b2b2b; }
.combo.wide { width: 184px; padding-right: 5px; }
.combo.size { width: 60px; padding-right: 5px; line-height: 27px; }
.caret { border: 4px solid transparent; border-top-color: #000; border-bottom: 0; margin-top: 14px; }
.format { margin-top: 10px; }
.toggle, .plain { height: 32px; text-align: center; font: 22px/32px "Liberation Serif", serif; color: #1f3a60; }
.toggle { background: #c9dff5; border: 1px solid #62a2e4; line-height: 30px; }
.toggle.b { width: 35px; margin-left: 3px; font-weight: 700; font-size: 24px; }
.toggle.i { width: 36px; margin-left: -1px; font-style: italic; font-weight: 700; }
.plain.u { width: 35px; font-size: 20px; text-decoration: underline; text-underline-offset: 3px; }
.plain.s { width: 35px; font-size: 17px; line-height: 31px; font-weight: 700; text-decoration: line-through; }

.background { width: 134px; padding: 3px 8px 0 5px; }
.background .caption { padding-right: 1px; }
.option { width: 119px; height: 32px; padding: 4px 0 0 4px; border: 0; display: flex; gap: 4px; line-height: 25px; }
.option.selected { background: #c9dff5; box-shadow: inset 0 0 0 1px #62a2e4; }
.serif-a { font: 700 15px "Liberation Serif", serif; fill: #1f3a60; }

.colors { width: 531px; padding: 3px 0 0 5px; }
.colors .caption { padding-right: 6px; margin-left: -2px; }
.color-one { width: 62px; height: 99px; background: #c9dff5; border: 1px solid #62a2e4; padding-top: 3px; }
.swatch { background: #fff; border: 1px solid #8a8a8a; }
.large { width: 48px; height: 48px; background: #000; border-color: #7f7f7f; box-shadow: inset 0 0 0 2px #d5e4f5; margin-bottom: 7px; }
.medium { width: 36px; height: 36px; border: 1px solid #808080; margin: 10px 0 11px 2px; }
.color-two { width: 60px; }
.swatches { margin: 1px 9px 0 3px; display: grid; grid-template-columns: repeat(10, 31px); grid-auto-rows: 31px; gap: 2px; height: 97px; }
.swatches i { border: 1px solid #a0a0a0; box-shadow: inset 0 0 0 1px #fff; background: #f5f6f8; }
.swatches .c1 { background: #000; } .swatches .c2 { background: #7f7f7f; } .swatches .c3 { background: #880015; } .swatches .c4 { background: #ed1c24; } .swatches .c5 { background: #ff7f27; }
.swatches .c6 { background: #fff200; } .swatches .c7 { background: #22b14c; } .swatches .c8 { background: #00a2e8; } .swatches .c9 { background: #3f48cc; } .swatches .c10 { background: #a349a4; }
.swatches .c11 { background: #fff; } .swatches .c12 { background: #c3c3c3; } .swatches .c13 { background: #b97a57; } .swatches .c14 { background: #ffaec9; } .swatches .c15 { background: #ffc90e; }
.swatches .c16 { background: #efe4b0; } .swatches .c17 { background: #b5e61d; } .swatches .c18 { background: #99d9ea; } .swatches .c19 { background: #7092be; } .swatches .c20 { background: #c8bfe7; }
.edit { padding-top: 6px; }
.edit svg { margin-bottom: 7px; }
.paint3d { width: 82px; padding: 8px 5px 0 0; }
.paint3d svg { margin-bottom: 6px; }

.stage { height: 774px; position: relative; background: linear-gradient(#c6cfe0, #dde7f3); display: flex; }
.canvas { width: 1421px; height: 769px; margin: 5px 0 0 5px; background: #fff; position: relative; overflow: hidden; }
.canvas-shadow { width: 8px; padding-top: 14px; }
.canvas-shadow i { display: block; height: 760px; background: linear-gradient(90deg, rgba(90,110,150,.35), rgba(90,110,150,0)); }
.scrollbar { margin-left: auto; width: 26px; background: #f0f0f0; border-left: 1px solid #fff; display: flex; flex-direction: column; justify-content: space-between; align-items: center; padding: 10px 0 8px; }
.photo { width: 1292px; height: 649px; border: solid #333; border-width: 0 11px 0 15px; position: relative; background: #fefefe; font-family: "Open Sans", sans-serif; }
.browser-strip { height: 8px; background: linear-gradient(#d5d8dc, #d5d8dc) 106px 0 / 856px 3px no-repeat #e6e8e9; }
.aws-nav { width: 1263px; height: 96px; background: #252e42; color: #dcdfe4; padding: 14px 0 0 35px; }
.aws-logo { overflow: visible; }
.aws-top { display: flex; }
.aws-links { display: flex; align-items: flex-start; margin: 5px 0 0 auto; padding-right: 37px; font-size: 12.5px; font-weight: 600; line-height: 29px; }
.contact { margin-right: 16px; }
.menu { display: flex; margin-right: 18px; }
.menu b { font-weight: 600; }
.menu i { margin: 13px 0 0 2px; border: 4px solid transparent; border-top: 5px solid #dcdfe4; border-bottom: 0; }
.signin { width: 171px; height: 29px; margin-left: 4px; padding-left: 18px; border-radius: 2px; background: linear-gradient(#ff8a22, #f36400); color: #fff; font-weight: 700; font-size: 13px; }
.aws-menu { display: flex; gap: 18.4px; padding: 10px 0 0 2.5px; font-size: 13.5px; font-weight: 600; line-height: 20px; }
.aws-menu svg { margin: 2px 0 0 3px; }
article { height: 524px; padding: 25px 0 0 79px; position: relative; }
h1 { margin: 0; font-size: 27px; line-height: 40px; font-weight: 300; color: #3f5170; }
p { margin: 12px 0 0; font-size: 17px; line-height: 26.5px; font-weight: 300; color: #555; }
p span { display: block; }
.diagram { margin: -.5px 0 0 -79px; }
.remark { margin: 0; font-style: italic; }
.lane { font-size: 10.5px; font-weight: 700; fill: #4c4c4e; }
.lane.gray { font-weight: 600; fill: #a0a0a2; }
.lane.violet { fill: #8f86f5; font-size: 10px; }
.step { font-size: 14px; font-weight: 700; font-variant: small-caps; fill: #4c4c4e; }
.note { font-size: 8px; font-weight: 600; fill: #5c5c5e; }
.aws-word { font: 600 30px "Open Sans", sans-serif; fill: #fff; }
.mini-search { font-size: 14px; fill: #333; }
.mini-w { font: 700 11px "Open Sans", sans-serif; fill: #fff; }
.mini-clock, .mini-brand { font-size: 11px; fill: #e8e8ec; }
.watermark { position: absolute; left: 963px; top: 593px; font: 22px/30px "DejaVu Serif Condensed", "DejaVu Serif", serif; color: #7d7d7d; -webkit-text-stroke: .4px #7d7d7d; }
.pager { position: absolute; top: 272px; width: 31px; height: 52px; background: #1c1d1f; display: flex; align-items: center; justify-content: center; }
.prev { left: 0; padding-right: 2px; }
.next { right: 0; }
.drawn-arrow { position: absolute; left: 735px; top: 523px; }
.textbox { position: absolute; left: 526px; top: 690px; width: 676px; height: 71px; }
.textbox svg { overflow: visible; }
.typed { position: absolute; left: 3px; top: 3px; font: italic 700 24px/35px "Open Sans", sans-serif; color: #000; }
.typed span { display: block; }

.status { height: 39px; background: #f0f0f0; border-top: 1px solid #d7d7d7; display: flex; font-size: 16px; color: #1a1a1a; }
.cell { width: 245px; border-right: 1px solid #d5d5d5; display: flex; gap: 6px; padding: 7px 0 0 5px; line-height: 28px; margin-bottom: 1px; }
.cell.pos { padding-left: 4px; gap: 6px; }
.cell svg { margin-top: 1px; }
.cell.long { width: 647px; }
.zoom { margin-left: auto; display: flex; padding-right: 4px; line-height: 42px; gap: 3px; }

.taskbar { height: 60px; background: #d6d6d8; display: flex; color: #000; }
.tray { display: flex; width: 680px; padding-left: 22px; font-size: 17px; line-height: 24px; }
.weather { margin-top: 10px; }
.temp { width: 74px; padding: 19px 0 0 9px; font-size: 18px; }
.trayicons { margin: 13px 0 0 9px; }
.lang { width: 41px; padding: 19px 0 0 8px; font-size: 16px; }
.clock { width: 113px; margin-left: 10px; padding-top: 3px; display: flex; flex-direction: column; align-items: center; line-height: 28px; font-size: 16px; }
.notif { margin-left: 11px; }
.badge-n { font: 14px "Open Sans", sans-serif; fill: #fff; }
.notif-n { font: 600 16px "Open Sans", sans-serif; }
```
